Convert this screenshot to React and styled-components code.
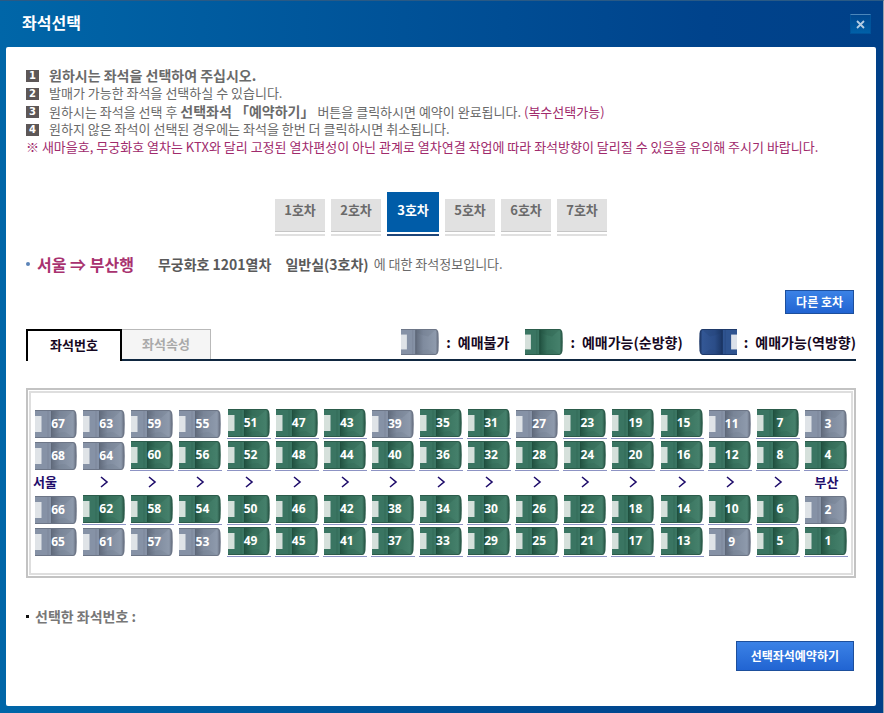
import React, { useState } from "react";
import styled, { createGlobalStyle, css } from "styled-components";

const GlobalStyle = createGlobalStyle`
  * {
    box-sizing: border-box;
  }

  body {
    margin: 0;
    font-family: "Noto Sans CJK KR", sans-serif;
    font-size: 13px;
    line-height: 18px;
    color: #6a6a6a;
  }

  button {
    font-family: inherit;
    cursor: pointer;
  }
`;

const Popup = styled.div`
  min-height: 100vh;
  display: flex;
  flex-direction: column;
  padding: 0 7px 7px 6px;
  background: linear-gradient(to right, #0066a8 0%, #00438c 80%, #004088 100%);
  border-top: 1px solid #2a5a85;
  border-right: 1px solid #9aa3ad;
`;

const Header = styled.header`
  display: flex;
  justify-content: space-between;
  align-items: center;
  height: 46px;
  padding: 0 5px 0 16px;
`;

const Title = styled.h1`
  margin: 0;
  padding-bottom: 4px;
  font-size: 16px;
  font-weight: 700;
  line-height: 20px;
  color: #fff;
`;

const CloseButton = styled.button`
  display: flex;
  align-items: center;
  justify-content: center;
  width: 21px;
  height: 20px;
  padding: 0;
  border: 1px solid #00539a;
  border-top-color: #4c87bb;
  background: linear-gradient(#00478f, #0060a8);
`;

const Panel = styled.main`
  flex: 1;
  padding: 19px 20px 35px;
  background: #fff;
  border-radius: 2px;
`;

/* Guide */
const GuideList = styled.ol`
  list-style: none;
  margin: 0;
  padding: 0;
`;

const GuideItem = styled.li`
  display: flex;
  align-items: center;
  gap: 10px;
  height: 18px;
`;

const GuideNumber = styled.span`
  width: 13px;
  height: 12px;
  margin-top: 2px;
  background: #5d5757;
  color: #fff;
  font: bold 10px/12px "DejaVu Sans", sans-serif;
  text-align: center;
`;

const Strong = styled.strong`
  font-size: 14px;
  font-weight: 700;
`;

const Accent = styled.span`
  color: #a02a6c;
`;

const Caution = styled.p`
  margin: 0;
  color: #a02a6c;
`;

/* Car tabs */
const CarTabs = styled.nav`
  display: flex;
  justify-content: center;
  align-items: flex-end;
  gap: 6px;
  height: 44px;
  margin-top: 36px;
`;

const CarTab = styled.button`
  width: 50px;
  height: 37px;
  padding: 0 0 14px;
  border: 0;
  border-bottom: 2px solid #e0e0e0;
  background: linear-gradient(#c6c6c6, #c6c6c6) 0 32px / 100% 1px no-repeat,
    linear-gradient(#e1e1e1, #e1e1e1) 0 0 / 100% 32px no-repeat;
  color: #6a6a6a;
  font-size: 13px;
  font-weight: 700;
  line-height: 20px;

  ${(p) =>
    p.$active &&
    css`
      width: 52px;
      height: 44px;
      padding-bottom: 7px;
      border-bottom-color: #1d4579;
      background: linear-gradient(#005ca8, #005ca8) 0 0 / 100% 40px no-repeat;
      color: #fff;
    `}
`;

/* Route */
const Route = styled.div`
  display: flex;
  align-items: center;
  height: 20px;
  margin-top: 18px;
`;

const RouteBullet = styled.span`
  width: 4px;
  height: 4px;
  border-radius: 50%;
  background: #5b84b8;
`;

const RouteName = styled.h2`
  margin: 0 24px 0 7px;
  font-size: 16px;
  font-weight: 700;
  line-height: 20px;
  color: #a8326f;
`;

const TrainName = styled.strong`
  margin-right: 14px;
  font-size: 14px;
  font-weight: 700;
  color: #5a5a5a;
`;

const CarName = styled(TrainName)`
  margin-right: 5px;
`;

const Actions = styled.div`
  display: flex;
  justify-content: flex-end;
  margin-top: ${(p) => p.$gap}px;
  padding-right: 2px;
`;

const BlueButton = styled.button`
  height: ${(p) => (p.$large ? 30 : 24)}px;
  padding: 0 ${(p) => (p.$large ? 14 : 10)}px;
  border: 1px solid #1d4f9c;
  background: linear-gradient(#3b82e6, #2164d2);
  color: #fff;
  font-size: 12px;
  font-weight: 700;
  line-height: 20px;
`;

/* View tabs with legend */
const ViewBar = styled.div`
  display: flex;
  justify-content: space-between;
  height: 32px;
  margin-top: 15px;
  background: linear-gradient(#0f2740, #0f2740) 0 30px / 100% 2px no-repeat;
`;

const ViewTabs = styled.div`
  display: flex;
`;

const ViewTab = styled.button`
  width: 89px;
  height: 30px;
  padding: 0 0 1px;
  border: 1px solid #b9b9b9;
  border-width: 1px 1px 0 0;
  background: #f5f5f5;
  color: #a9a9a9;
  font-size: 13px;
  font-weight: 700;
  line-height: 20px;

  ${(p) =>
    p.$active &&
    css`
      width: 96px;
      height: 32px;
      padding-bottom: 2px;
      border: 2px solid #000;
      border-bottom: 0;
      background: #fff;
      color: #160822;
    `}
`;

const Legend = styled.ul`
  display: flex;
  gap: 16px;
  list-style: none;
  margin: 0;
  padding: 0;
`;

const LegendItem = styled.li`
  display: flex;
  align-items: center;
  gap: 7px;
  height: 26px;
  color: #160822;
  font-size: 14px;
  font-weight: 700;
`;

/* Seat map */
const MapFrame = styled.section`
  margin-top: 27px;
  padding: 1px;
  border: 2px solid #c3c3c3;
`;

const MapGrid = styled.div`
  display: grid;
  grid-template-columns: repeat(17, minmax(0, 1fr));
  grid-template-rows: 32px 32px 22px 32px 32px;
  padding: 16px 1px 14px;
  border: 2px solid #dedede;
`;

const SeatButton = styled.button`
  display: grid;
  justify-self: center;
  align-self: start;
  width: 44px;
  height: 30px;
  padding: 0;
  border: 0;
  border-bottom: 1px solid #8d93c4;
  background: none;
  color: #fff;
  font: bold 12px/28px "Open Sans", sans-serif;

  svg,
  span {
    grid-area: 1 / 1;
  }

  svg {
    margin-left: 1px;
  }

  span {
    z-index: 1;
    padding-left: 4px;
  }

  &:disabled {
    padding-top: 1px;
    border-bottom: 0;
    cursor: default;
  }
`;

const AisleCell = styled.div`
  display: flex;
  align-items: center;
  justify-content: center;
  padding-bottom: 4px;
  color: #1f0d6b;
  font-size: 13px;
  font-weight: 700;
`;

const Station = styled(AisleCell)`
  justify-content: ${(p) => (p.$end ? "center" : "flex-start")};
  padding-left: 1px;
  white-space: nowrap;
`;

const Selected = styled.p`
  display: flex;
  align-items: center;
  gap: 6px;
  margin: 29px 0 0;
  font-size: 14px;
  font-weight: 700;
  color: #777;

  &::before {
    content: "";
    width: 3px;
    height: 3px;
    background: #111;
  }
`;

const seatColors = {
  gray: { edge: "#6d7687", back: "#8692a6", fold: "#5f697a", base: "#7f8b9e", light: "#8e9aac", head: "#dfe3e7" },
  green: { edge: "#2c5c4b", back: "#3a7562", fold: "#20503f", base: "#39745f", light: "#45806b", head: "#d5e0db" },
  blue: { edge: "#1f3a6a", back: "#2f5490", fold: "#1a3564", base: "#2b4d88", light: "#335795", head: "#dbe1ea" },
};

const SeatIcon = ({ color, width = 42, height = 28, flip }) => {
  const c = seatColors[color];
  const id = `cushion-${color}`;
  return (
    <svg width={width} height={height} viewBox="0 0 42 28" preserveAspectRatio="none" aria-hidden="true">
      <defs>
        <linearGradient id={id}>
          <stop offset="0" stopColor={c.fold} />
          <stop offset="0.35" stopColor={c.base} />
          <stop offset="0.9" stopColor={c.light} />
          <stop offset="1" stopColor={c.edge} />
        </linearGradient>
      </defs>
      <g transform={flip ? "translate(42 0) scale(-1 1)" : undefined}>
        <path d="M0 0H38Q41 0 41.5 5Q42 14 41.5 23Q41 28 38 28H0Z" fill={c.edge} />
        <path d="M0 1H16V27H0Z" fill={c.back} />
        <path d="M13 1V27" stroke={c.fold} strokeWidth="0.6" opacity="0.4" />
        <path d="M16 1H37.5Q39.8 1 40.3 5Q40.8 14 40.3 23Q39.8 27 37.5 27H16Z" fill={`url(#${id})`} />
        <path d="M18 1H38L30 8Q23 7 18 4Z" fill={c.fold} opacity="0.18" />
        <path d="M18 27H38L30 22Q23 22 18 25Z" fill={c.fold} opacity="0.14" />
        <path d="M16.5 1V27" stroke={c.fold} strokeWidth="1" />
        <rect x="0" y="6" width="6.5" height="16" fill={c.head} />
      </g>
    </svg>
  );
};

const ChevronIcon = () => (
  <svg width="10" height="12" viewBox="0 0 10 12" fill="none" stroke="currentColor" strokeWidth="1.6" aria-hidden="true">
    <path d="M2 1L8 6L2 11" />
  </svg>
);

const CloseIcon = () => (
  <svg width="9" height="9" viewBox="0 0 9 9" fill="none" stroke="#b4cde3" strokeWidth="1.8" aria-hidden="true">
    <path d="M1 1L8 8M8 1L1 8" />
  </svg>
);

const cars = [1, 2, 3, 5, 6, 7];

const legend = [
  { color: "gray", label: "예매불가" },
  { color: "green", label: "예매가능(순방향)" },
  { color: "blue", label: "예매가능(역방향)", flip: true },
];

const unavailable = [67, 63, 59, 55, 39, 27, 11, 3, 68, 64, 66, 2, 65, 61, 57, 53, 9];

// 한 줄에 17석, 번호는 4씩 줄어든다
const seatRow = (first) => Array.from({ length: 17 }, (_, i) => first - i * 4);

const SeatRow = ({ first, selected, onSelect }) =>
  seatRow(first).map((no) => {
    const disabled = unavailable.includes(no);
    return (
      <SeatButton
        key={no}
        type="button"
        disabled={disabled}
        aria-pressed={selected.includes(no)}
        onClick={() => onSelect(no)}
      >
        <SeatIcon color={disabled ? "gray" : "green"} />
        <span>{no}</span>
      </SeatButton>
    );
  });

export default function App() {
  const [car, setCar] = useState(3);
  const [view, setView] = useState("number");
  const [selected, setSelected] = useState([]);

  const toggleSeat = (no) =>
    setSelected((prev) => (prev.includes(no) ? prev.filter((n) => n !== no) : [...prev, no]));

  return (
    <>
      <GlobalStyle />
      <Popup>
        <Header>
          <Title>좌석선택</Title>
          <CloseButton type="button" aria-label="닫기">
            <CloseIcon />
          </CloseButton>
        </Header>

        <Panel>
          <GuideList>
            <GuideItem>
              <GuideNumber>1</GuideNumber>
              <Strong>원하시는 좌석을 선택하여 주십시오.</Strong>
            </GuideItem>
            <GuideItem>
              <GuideNumber>2</GuideNumber>
              <span>발매가 가능한 좌석을 선택하실 수 있습니다.</span>
            </GuideItem>
            <GuideItem>
              <GuideNumber>3</GuideNumber>
              <span>
                원하시는 좌석을 선택 후 <Strong>선택좌석 「예약하기」</Strong> 버튼을 클릭하시면 예약이 완료됩니다.{" "}
                <Accent>(복수선택가능)</Accent>
              </span>
            </GuideItem>
            <GuideItem>
              <GuideNumber>4</GuideNumber>
              <span>원하지 않은 좌석이 선택된 경우에는 좌석을 한번 더 클릭하시면 취소됩니다.</span>
            </GuideItem>
          </GuideList>
          <Caution>
            ※ 새마을호, 무궁화호 열차는 KTX와 달리 고정된 열차편성이 아닌 관계로 열차연결 작업에 따라 좌석방향이 달리질 수
            있음을 유의해 주시기 바랍니다.
          </Caution>

          <CarTabs>
            {cars.map((no) => (
              <CarTab key={no} type="button" $active={car === no} onClick={() => setCar(no)}>
                {no}호차
              </CarTab>
            ))}
          </CarTabs>

          <Route>
            <RouteBullet />
            <RouteName>서울 ⇒ 부산행</RouteName>
            <TrainName>무궁화호 1201열차</TrainName>
            <CarName>일반실({car}호차)</CarName>
            <span>에 대한 좌석정보입니다.</span>
          </Route>

          <Actions $gap={16}>
            <BlueButton type="button">다른 호차</BlueButton>
          </Actions>

          <ViewBar>
            <ViewTabs>
              <ViewTab type="button" $active={view === "number"} onClick={() => setView("number")}>
                좌석번호
              </ViewTab>
              <ViewTab type="button" $active={view === "attr"} onClick={() => setView("attr")}>
                좌석속성
              </ViewTab>
            </ViewTabs>
            <Legend>
              {legend.map((item) => (
                <LegendItem key={item.color}>
                  <SeatIcon color={item.color} width={38} height={26} flip={item.flip} />
                  <span>:</span>
                  <span>{item.label}</span>
                </LegendItem>
              ))}
            </Legend>
          </ViewBar>

          <MapFrame>
            <MapGrid>
              <SeatRow first={67} selected={selected} onSelect={toggleSeat} />
              <SeatRow first={68} selected={selected} onSelect={toggleSeat} />
              <Station>서울</Station>
              {Array.from({ length: 15 }, (_, i) => (
                <AisleCell key={i}>
                  <ChevronIcon />
                </AisleCell>
              ))}
              <Station $end>부산</Station>
              <SeatRow first={66} selected={selected} onSelect={toggleSeat} />
              <SeatRow first={65} selected={selected} onSelect={toggleSeat} />
            </MapGrid>
          </MapFrame>

          <Selected>선택한 좌석번호 : {selected.join(", ")}</Selected>

          <Actions $gap={16}>
            <BlueButton type="button" $large>
              선택좌석예약하기
            </BlueButton>
          </Actions>
        </Panel>
      </Popup>
    </>
  );
}
